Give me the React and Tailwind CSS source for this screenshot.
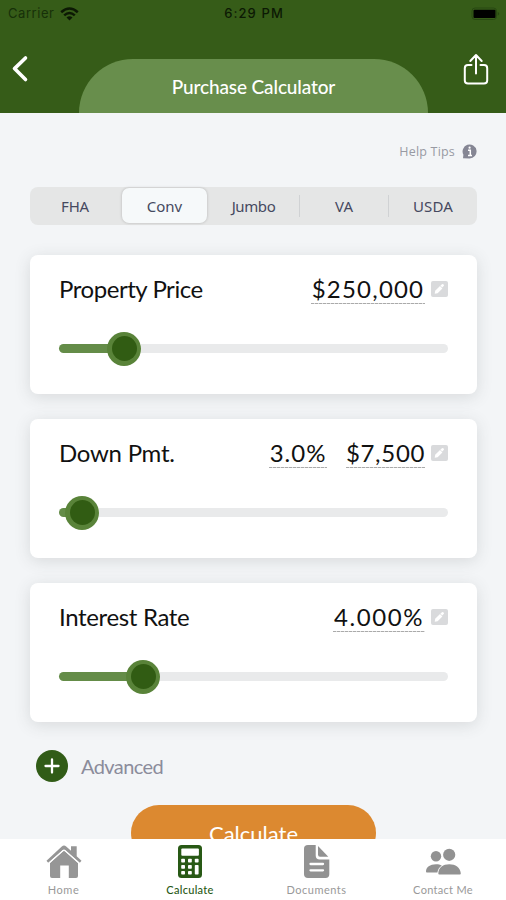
import React from "react";

const LOAN_TYPES = [
  { name: "FHA", width: "w-[90px]", track: "tracking-[-0.2px]" },
  { name: "Conv", width: "w-[88px]", track: "tracking-[0px]", active: true },
  { name: "Jumbo", width: "w-[91px]", track: "tracking-[-0.4px]" },
  { name: "VA", width: "w-[89px]", track: "tracking-[0px]", divider: true },
  { name: "USDA", width: "w-[89px]", track: "tracking-[0.2px]", divider: true },
];

function EditIcon() {
  return (
    <svg className="ml-1.5 mt-[9px] h-4 w-[17px] shrink-0" viewBox="0 0 17 16">
      <rect width="17" height="16" rx="2" fill="#d9dadc" />
      <path d="M3.700 12.800l.5-3 4.800-4.800 2.400 2.400-4.800 4.900z" fill="#fff" />
      <path d="M9.400 4.600l1.600-1.400q.8-.6 1.600.2.800.8.100 1.600l-1.500 1.500z" fill="#fff" />
    </svg>
  );
}

function SliderCard({ title, titleTrack, values, position }) {
  return (
    <section className="h-[139px] shrink-0 rounded-[8px] bg-white pl-[29px] pr-[29px] pt-[17px] shadow-[0_3px_16px_rgba(60,65,70,0.15)]">
      <div className="flex h-[34px]">
        <h2 className={"flex-1 whitespace-nowrap text-[24px] leading-[34px] text-[#111] " + titleTrack}>
          {title}
        </h2>
        {values.map((v) => (
          <span
            key={v.text}
            className={"ml-[19px] flex h-[32px] shrink-0 justify-center whitespace-nowrap text-[24px] leading-[34px] text-[#111] " + v.style}
          >
            {v.text}
          </span>
        ))}
        <EditIcon />
      </div>
      <div className="mt-[26px] flex h-[34px] items-center">
        <div className="h-[9px] rounded-l-full bg-[#648c48]" style={{ width: position - 14 }} />
        <div className="-ml-[2px] flex h-[34px] w-[34px] shrink-0 items-center justify-center rounded-full bg-[#598339]">
          <div className="h-[25px] w-[25px] rounded-full bg-[#315c13]" />
        </div>
        <div className="h-[9px] flex-1 rounded-r-full bg-[#e9eaeb]" />
      </div>
    </section>
  );
}

const DASH = "bg-[repeating-linear-gradient(90deg,#aaa_0_3px,#dedede_3px_4px)] bg-[length:100%_1px] bg-bottom bg-no-repeat ";

function HomeIcon() {
  return (
    <svg className="h-[34px] w-[36px]" viewBox="0 0 36 34">
      <g fill="#969696">
        <path d="M.5 16.700L15.800 2.400q2.200-1.900 4.400 0L25 6.800V2.200h5.700v10l4.800 4.500-1.700 2L19.200 6q-1.200-1-2.400 0L2.200 18.700z" />
        <path d="M4 19L18 6.500 32 19v13q0 2-2 2h-7.200V21.500h-8.600V34H6Q4 34 4 32z" />
      </g>
      <path d="M2.700 19.300L16.700 6.900q1.300-1.100 2.600 0l14 12.400" fill="none" stroke="#fff" strokeWidth="1.100" />
    </svg>
  );
}

function CalculatorIcon() {
  return (
    <svg className="h-[34px] w-[26px]" viewBox="0 0 26 34">
      <rect x="1" y="1" width="24" height="33" rx="3.5" fill="#285915" />
      <g fill="#fff">
        <rect x="4.3" y="4.5" width="17.6" height="7.2" rx="1" />
        <rect x="4.2" y="14.8" width="3.8" height="3.8" rx=".8" />
        <rect x="11" y="14.8" width="3.8" height="3.8" rx=".8" />
        <rect x="17.8" y="14.8" width="3.8" height="3.8" rx=".8" />
        <rect x="4.2" y="20.9" width="3.8" height="3.8" rx=".8" />
        <rect x="11" y="20.9" width="3.8" height="3.8" rx=".8" />
        <rect x="4.2" y="27" width="3.8" height="3.6" rx=".8" />
        <rect x="11" y="27" width="3.8" height="3.6" rx=".8" />
        <rect x="17.8" y="20.9" width="3.8" height="9.7" rx=".8" />
      </g>
    </svg>
  );
}

function DocumentIcon() {
  return (
    <svg className="h-[34px] w-[27px]" viewBox="0 0 27 34">
      <path d="M5 1h7.700v10.500q0 4 4 4H26.300v14.800q0 3.700-3.700 3.700H5Q1 34 1 30.300V4.700Q1 1 5 1z" fill="#929292" />
      <path d="M15 2L25.300 12.800h-8.300q-2 0-2-2.200z" fill="#929292" />
      <path d="M7.500 20h12.500M7.500 26.300h12.500" stroke="#fff" strokeWidth="2.300" strokeLinecap="round" />
    </svg>
  );
}

function ContactIcon() {
  return (
    <svg className="h-[34px] w-[36px]" viewBox="0 0 36 34" fill="#929292">
      <circle cx="11" cy="12.200" r="5.200" />
      <circle cx="24.200" cy="10.800" r="6.100" />
      <path d="M12.400 28.500H1.800Q1 28.500 1 27.600C1 23 5 20.200 11 20.200c2.600 0 4 .4 5.800 1.300-2.600 1.900-3.900 4-4.400 7z" />
      <path d="M14.300 30.500Q13.200 30.500 13.300 29.300C13.800 23.200 18 20.300 24.300 20.300S35 23.200 35.800 29.300Q35.900 30.500 34.800 30.500z" />
    </svg>
  );
}

const TABS = [
  { name: "Home", icon: HomeIcon, width: "w-[127px]", text: "text-[#999] tracking-[0.6px]" },
  { name: "Calculate", icon: CalculatorIcon, width: "w-[126px]", text: "text-[#285915] tracking-[0.3px] font-medium" },
  { name: "Documents", icon: DocumentIcon, width: "w-[127px]", text: "text-[#999] tracking-[0.5px]" },
  { name: "Contact Me", icon: ContactIcon, width: "w-[126px]", text: "text-[#999] tracking-[0.3px]" },
];

export default function App() {
  return (
    <div className="flex h-[900px] w-[506px] flex-col overflow-hidden bg-[#f3f5f7] font-['Lato','Open_Sans',sans-serif]">
      <header className="flex h-[113px] shrink-0 flex-col bg-[#365c18]">
        <div className="grid h-7 shrink-0 grid-cols-3 items-center pl-[8px] pr-[6px] font-['Inter',sans-serif] text-[13px] text-[#0c1904]">
          <div className="flex items-center gap-[6px]">
            <span className="tracking-[0.55px] text-[#173009]">Carrier</span>
            <svg className="h-[14px] w-[19px]" viewBox="0 0 19 14" fill="none" stroke="#0c1904" strokeWidth="2.5">
              <path d="M1.2 5.2Q9.5-2.2 17.8 5.2M4.2 8.4q5.3-4.7 10.6 0" />
              <path d="M6.5 10.4q3-2.5 6 0L9.5 13.5z" fill="#0c1904" stroke="none" />
            </svg>
          </div>
          <span className="whitespace-nowrap text-center font-medium tracking-[1.100px]">6:29 PM</span>
          <svg className="h-[14px] w-[29px] justify-self-end" viewBox="0 0 29 14">
            <rect x="1" y="1" width="24.5" height="11.5" rx="3" fill="none" stroke="#284812" />
            <rect x="2.500" y="2.800" width="22" height="8.200" rx="1" fill="#000" />
            <path d="M26.7 4.7q3 2 0 4z" fill="#284812" />
          </svg>
        </div>
        <div className="flex h-[85px] justify-between">
          <svg className="ml-[11px] mt-[27px] h-7 w-[18px]" viewBox="0 0 18 28">
            <path d="M14.5 3L3.500 13.600l11 11" fill="none" stroke="#fff" strokeWidth="3.600" strokeLinecap="round" strokeLinejoin="round" />
          </svg>
          <div className="ml-[50px] mt-[31px] flex h-[54px] w-[349px] justify-center rounded-t-[54px] bg-[#688e4c] pt-[1px]">
            <h1 className="text-[19px] font-medium leading-[54px] tracking-[-0.130px] text-white">Purchase Calculator</h1>
          </div>
          <svg className="ml-[34px] mr-[16px] mt-[25px] h-8 w-7" viewBox="0 0 28 32" fill="none" stroke="#fff" strokeWidth="2" strokeLinecap="round" strokeLinejoin="round">
            <path d="M9.500 12H6q-3.200 0-3.200 3.200v12.400q0 3 3.200 3h16q3.200 0 3.200-3V15.200Q25.200 12 22 12h-3.500M14 20.500V2.500M8.300 8L14 2l5.700 6" />
          </svg>
        </div>
      </header>

      <main className="flex h-[726px] shrink-0 flex-col overflow-hidden pl-[30px] pr-[29px]">
        <div className="mt-[29px] flex h-5 items-center justify-end gap-[7px] font-['Open_Sans',sans-serif] text-[12.500px] text-[#989aa3]">
          <span className="pt-px tracking-[0.2px]">Help Tips</span>
          <svg className="h-[15px] w-[15px]" viewBox="0 0 15 15">
            <path d="M1 14.300l.4-3.500A7 7 0 1 1 7.500 14.500L1 14.300z" fill="#858694" />
            <path d="M6 6.300h2.300v5M6 11.500h4" fill="none" stroke="#fff" strokeWidth="1.500" />
            <circle cx="7.600" cy="3.700" r="1.100" fill="#fff" />
          </svg>
        </div>

        <nav className="mt-[25px] flex h-[38px] shrink-0 items-center rounded-[8px] bg-[#e5e6e6] font-['Noto_Sans',sans-serif] text-[15px] text-[#454960]">
          {LOAN_TYPES.map((t) => (
            <div key={t.name} className={"flex h-[38px] items-center " + t.width}>
              {t.divider && <span className="h-[22px] w-px bg-[#d0d2d4]" />}
              <span
                className={
                  "flex flex-1 items-center justify-center " + t.track +
                  (t.active ? " ml-[2px] mr-[1px] h-[35px] rounded-[7px] bg-[#f6f9fa] shadow-[0_0_3px_rgba(0,0,0,0.22)]" : "")
                }
              >
                {t.name}
              </span>
            </div>
          ))}
        </nav>

        <div className="mt-[30px] flex shrink-0 flex-col gap-[25px]">
          <SliderCard
            title="Property Price"
            titleTrack="tracking-[-0.450px]"
            position={64}
            values={[{ text: "$250,000", style: DASH + "w-[114px] tracking-[1.200px]" }]}
          />
          <SliderCard
            title="Down Pmt."
            titleTrack="tracking-[-0.250px]"
            position={22}
            values={[
              { text: "3.0%", style: DASH + "w-[58px] tracking-[1px]" },
              { text: "$7,500", style: DASH + "w-[79px] tracking-[0.700px]" },
            ]}
          />
          <SliderCard
            title="Interest Rate"
            titleTrack="tracking-[-0.350px]"
            position={83}
            values={[{ text: "4.000%", style: DASH + "w-[92px] tracking-[1.600px]" }]}
          />
        </div>

        <div className="ml-[6px] mt-[28px] flex h-8 shrink-0 items-center gap-[13px]">
          <svg className="h-8 w-8" viewBox="0 0 32 32">
            <circle cx="16" cy="16" r="16" fill="#315c17" />
            <path d="M9.500 16h13M16 9.500v13" stroke="#fff" strokeWidth="2.300" strokeLinecap="round" />
          </svg>
          <span className="text-[20px] tracking-[-0.600px] text-[#8b8c9b]">Advanced</span>
        </div>

        <button className="ml-[101px] mt-[23px] flex h-[56px] w-[245px] shrink-0 justify-center rounded-full bg-[#dc8930] text-[22px] leading-[58px] text-white">
          Calculate
        </button>
      </main>

      <footer className="flex h-[61px] shrink-0 bg-white">
        {TABS.map((tab) => (
          <div key={tab.name} className={"flex flex-col items-center pt-[5px] " + tab.width}>
            <tab.icon />
            <span className={"mt-[4px] whitespace-nowrap text-[11px] leading-4 " + tab.text}>{tab.name}</span>
          </div>
        ))}
      </footer>
    </div>
  );
}
